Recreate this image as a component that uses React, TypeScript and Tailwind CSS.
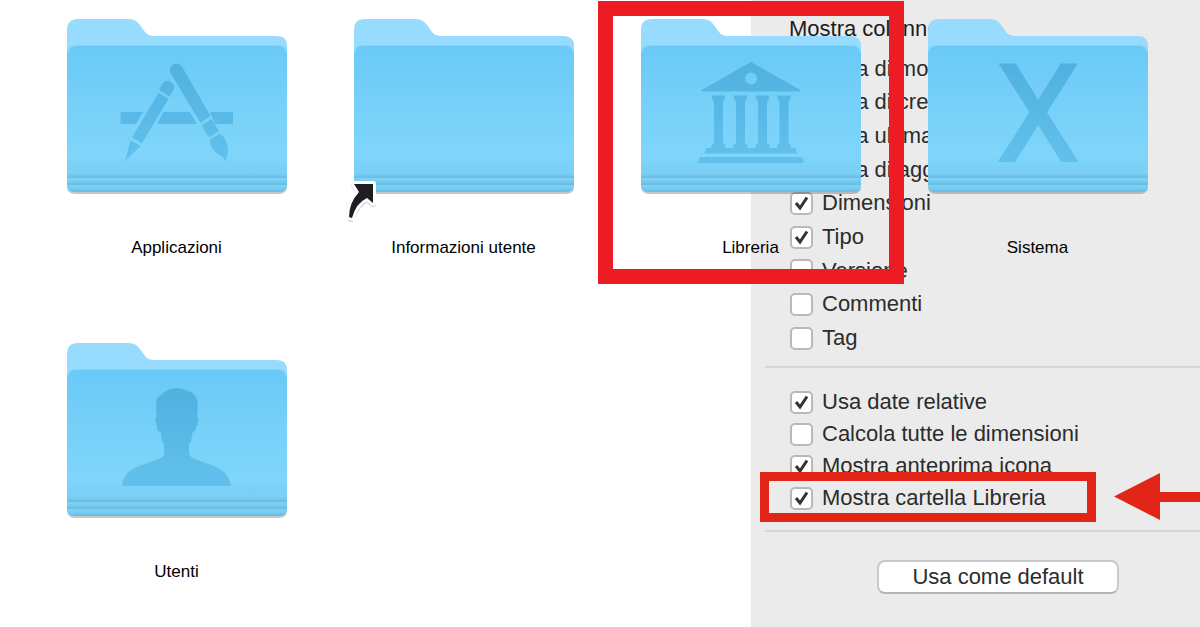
import type { ReactNode } from 'react';

interface Folder {
    name: string;
    glyph?: ReactNode;
    alias?: boolean;
    highlighted?: boolean;
}

interface Option {
    id: string;
    label: string;
    checked: boolean;
}

const columns: Option[] = [
    { id: 'modifica', label: 'Data di modifica', checked: true },
    { id: 'creazione', label: 'Data di creazione', checked: false },
    { id: 'apertura', label: 'Data ultima', checked: false },
    { id: 'aggiunta', label: 'Data di aggiunta', checked: false },
    { id: 'dimensioni', label: 'Dimensioni', checked: true },
    { id: 'tipo', label: 'Tipo', checked: true },
    { id: 'versione', label: 'Versione', checked: false },
    { id: 'commenti', label: 'Commenti', checked: false },
    { id: 'tag', label: 'Tag', checked: false },
];

const settings: Option[] = [
    { id: 'relative', label: 'Usa date relative', checked: true },
    { id: 'calcola', label: 'Calcola tutte le dimensioni', checked: false },
    { id: 'anteprima', label: 'Mostra anteprima icona', checked: true },
    { id: 'libreria', label: 'Mostra cartella Libreria', checked: true },
];

// Glyphs share the 220x177 coordinates of the folder
const AppsGlyph = () => (
    <g>
        <path d="M53.500 93H76L69 105H53.500ZM96.500 93H123L130 105H90ZM143 93H166V105H148Z" />
        <path d="M92.500 70L95.500 64.500Q98.500 60.500 103 62.500Q108.500 65.500 107 70L102.500 77.500L92.500 71.500Z" />
        <path d="M91.500 74L101.500 80L75 124L65 118.500Z" />
        <path d="M63.500 121.500L73.500 127L58 142Z" />
        <path d="M103.500 54Q101 48.500 106 45.500Q111.500 43 115 47.500L143.500 97L133.500 104Z" />
        <path d="M134.500 106.500L144.500 100L152 112L142 118.500Z" />
        <path d="M143 120.500L153 114.500Q160 120 161 130Q161 137 158 142Q156.500 137.500 151 135Q143 130 143 120.500Z" />
    </g>
);

const LibraryGlyph = () => (
    <g>
        <path fillRule="evenodd" d="M110 43L159.500 71V72.500H60.500V71ZM110 53.500A6 6 0 1 0 110 65.500A6 6 0 1 0 110 53.500Z" />
        {[0, 22, 44, 65.5].map((x) => (
            <path
                key={x}
                transform={`translate(${x} 0)`}
                d="M70.500 76.500H84.500L83 82H82V124.500L84.500 126V129H70.500V126L73 124.500V82H72Z"
            />
        ))}
        <path d="M65.500 129H154.500L156.500 134.500H63.500Z" />
        <path d="M59 138H161L163 144H57Z" />
    </g>
);

const SystemGlyph = () => (
    <text
        x="110"
        y="142"
        textAnchor="middle"
        fontFamily="Roboto, sans-serif"
        fontSize="135"
        stroke="url(#glyph)"
        strokeWidth="2"
    >
        X
    </text>
);

const UserGlyph = () => (
    <path d="M110 45Q104 45 98 48.500L90 55Q88.500 61 89.500 74Q87.500 75 89 80L91 88L94 89Q94 98 97 101V108Q98 114 92 116L72 123Q56 129 55 143H164Q162 129 147 123L128 116Q121 114 122 107V101Q125 98 125.500 89L128 88L131 80Q132 75 130 74Q132 60 129 54Q126 49 121 48Q115 45 110 45Z" />
);

const folders: Folder[] = [
    { name: 'Applicazioni', glyph: <AppsGlyph /> },
    { name: 'Informazioni utente', alias: true },
    { name: 'Libreria', glyph: <LibraryGlyph />, highlighted: true },
    { name: 'Sistema', glyph: <SystemGlyph /> },
    { name: 'Utenti', glyph: <UserGlyph /> },
];

function SharedGradients() {
    return (
        <svg className="absolute size-0" aria-hidden="true">
            <defs>
                <linearGradient id="front" x1="0" y1="0" x2="0" y2="1">
                    <stop offset="0" stopColor="#69c9f6" />
                    <stop offset="0.45" stopColor="#78d1f9" />
                    <stop offset="0.75" stopColor="#7fd5fa" />
                    <stop offset="1" stopColor="#6fc6ed" />
                </linearGradient>
                <linearGradient id="glyph" gradientUnits="userSpaceOnUse" x1="0" y1="44" x2="0" y2="144">
                    <stop offset="0" stopColor="#50b1e0" />
                    <stop offset="1" stopColor="#62c1ec" />
                </linearGradient>
                <linearGradient id="stripe" x1="0" y1="0" x2="0" y2="1">
                    <stop offset="0" stopColor="#84d2f3" />
                    <stop offset="0.5" stopColor="#78cbf0" />
                    <stop offset="1" stopColor="#62bce6" />
                </linearGradient>
            </defs>
        </svg>
    );
}

function FolderIcon({ glyph, alias }: Pick<Folder, 'glyph' | 'alias'>) {
    return (
        <svg width="220" height="204" viewBox="0 0 220 204" className="overflow-visible" aria-hidden="true">
            <path d="M0 100V167Q0 175 8 175H212Q220 175 220 167V100Z" fill="#000" opacity="0.22" />
            <path d="M0 11Q0 0 11 0H62Q69 0 73 6L78 13Q81 17 87 17H210Q220 17 220 27V120H0Z" fill="#97dcfe" />
            <path d="M0 36Q0 26 10 26H210Q220 26 220 36V165Q220 173 212 173H8Q0 173 0 165Z" fill="url(#front)" />
            <path d="M1 33Q3 26.500 10 26.500H210Q217 26.500 219 33" fill="none" stroke="#85d5fb" />
            <rect y="152" width="220" height="7" fill="url(#stripe)" />
            <rect y="159" width="220" height="7" fill="url(#stripe)" />
            <path d="M0 166H220Q219.500 173 212 173H8Q0.500 173 0 166Z" fill="url(#stripe)" />
            {glyph && <g fill="url(#glyph)">{glyph}</g>}
            {alias && (
                <g strokeLinejoin="round" strokeWidth="6" paintOrder="stroke">
                    <path
                        d="M0 166H19V185L13 180Q4 184 -3 200L-5 197Q-5 184 5 174Z"
                        fill="#000"
                        stroke="#000"
                        opacity="0.2"
                    />
                    <path
                        d="M0 165H19V184L13 179Q2 184 -2 199L-5 198Q-5 184 5 173Z"
                        fill="#1d1e21"
                        stroke="#fff"
                    />
                </g>
            )}
        </svg>
    );
}

function FolderItem({ name, glyph, alias, highlighted }: Folder) {
    return (
        <li className="relative flex h-[324px] flex-col items-center">
            <FolderIcon glyph={glyph} alias={alias} />
            <span className="mt-[13px] text-[17px] leading-6 text-black">{name}</span>
            {highlighted && (
                <div className="absolute -top-[18px] -right-[10px] -left-[9px] h-[283px] border-[15px] border-[#ed1c24]" />
            )}
        </li>
    );
}

function CheckRow({ option }: { option: Option }) {
    return (
        <div className="flex h-8 items-center gap-[9px]">
            <span className="grid size-[23px] shrink-0">
                <input
                    id={option.id}
                    type="checkbox"
                    defaultChecked={option.checked}
                    className="peer col-start-1 row-start-1 appearance-none rounded-[5px] border-2 border-[#b9b9b9] bg-white"
                />
                <svg
                    viewBox="0 0 23 23"
                    className="pointer-events-none col-start-1 row-start-1 hidden peer-checked:block"
                    fill="none"
                    stroke="#333"
                    strokeWidth="3"
                >
                    <path d="M6 11L10 16L17 5.500" />
                </svg>
            </span>
            <label htmlFor={option.id} className="text-[22px] leading-8 whitespace-nowrap">
                {option.label}
            </label>
        </div>
    );
}

function OptionsPanel() {
    return (
        <section className="col-start-1 row-start-1 w-[449px] justify-self-end overflow-hidden bg-[#ebebeb] pt-[13px] pl-[14px] text-[#2c2c2c]">
            <h2 className="pl-6 text-[22px] leading-8 text-[#1c1c1c]">Mostra colonne:</h2>
            <div className="mt-[7px] grid h-[303px] grid-rows-9 items-center pl-[25px]">
                {columns.map((option) => (
                    <CheckRow key={option.id} option={option} />
                ))}
            </div>
            <hr className="mt-[11px] border-t-2 border-[#d6d6d6]" />
            <div className="relative mt-[18px] pl-[25px]">
                {settings.map((option) => (
                    <CheckRow key={option.id} option={option} />
                ))}
                <div className="absolute -bottom-2 -left-[5px] h-[50px] w-[336px] border-[9px] border-[#e12617]" />
                <div className="absolute right-0 -bottom-[6px] left-[349px] flex items-center">
                    <svg width="46" height="47" viewBox="0 0 46 47" fill="#e12617" aria-hidden="true">
                        <path d="M0 23.500L46 0V47Z" />
                    </svg>
                    <div className="h-[10px] grow bg-[#e12617]" />
                </div>
            </div>
            <hr className="mt-4 border-t-2 border-[#d6d6d6]" />
            <button
                type="button"
                className="mt-7 ml-28 h-[34px] w-[242px] rounded-lg border-2 border-[#c9c9c9] border-b-[#b5b5b5] bg-white text-[22px] leading-7"
            >
                Usa come default
            </button>
        </section>
    );
}

export default function App() {
    return (
        <main className="grid min-h-screen grid-cols-1 overflow-hidden bg-white font-['Liberation_Sans',Arial,sans-serif]">
            <SharedGradients />
            <OptionsPanel />
            <ul className="z-10 col-start-1 row-start-1 -mb-12 grid grid-cols-4 content-start pt-[19px] pr-[19px] pl-[33px]">
                {folders.map((folder) => (
                    <FolderItem key={folder.name} {...folder} />
                ))}
            </ul>
        </main>
    );
}
